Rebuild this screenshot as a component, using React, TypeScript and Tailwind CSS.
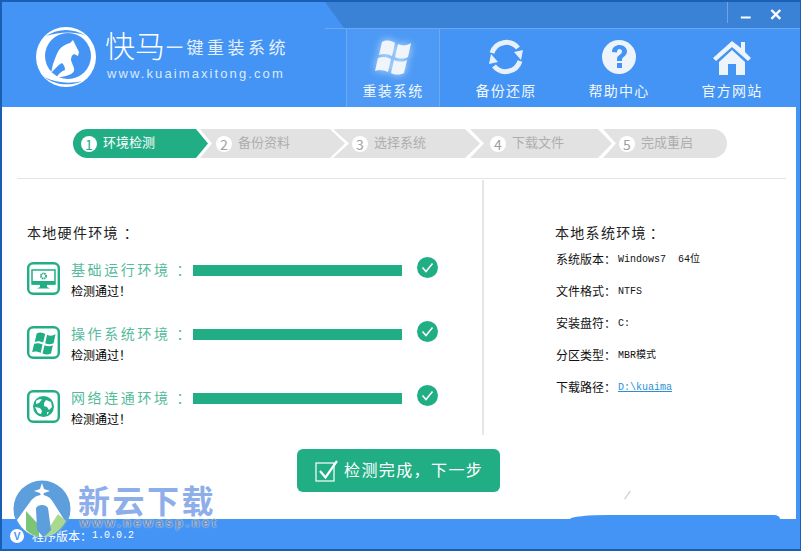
import React from 'react';

const cjk = { fontFamily: '"Noto Sans CJK SC", "Liberation Sans", sans-serif' };

const steps = [
  { n: 1, label: '环境检测', box: 'w-[135px] pl-[8px] rounded-l-full bg-[#22ae85] text-white [clip-path:polygon(0_0,123px_0,135px_50%,123px_100%,0_100%)]' },
  { n: 2, label: '备份资料', box: 'w-[145px] -ml-[8px] pl-[16px] bg-[#e2e2e2] text-[#aeaeae] [clip-path:polygon(0_0,130px_0,145px_50%,130px_100%,0_100%,12px_50%)]' },
  { n: 3, label: '选择系统', box: 'w-[147px] -ml-[12px] pl-[19px] bg-[#e2e2e2] text-[#aeaeae] [clip-path:polygon(0_0,132px_0,147px_50%,132px_100%,0_100%,16px_50%)]' },
  { n: 4, label: '下载文件', box: 'w-[142px] -ml-[10px] pl-[20px] bg-[#e2e2e2] text-[#aeaeae] [clip-path:polygon(0_0,128px_0,142px_50%,128px_100%,0_100%,14px_50%)]' },
  { n: 5, label: '完成重启', box: 'w-[124px] -ml-[9px] pl-[16px] rounded-r-full bg-[#e2e2e2] text-[#aeaeae] [clip-path:polygon(0_0,100%_0,100%_100%,0_100%,13px_50%)]' },
];

const sysRows: [string, React.ReactNode][] = [
  ['系统版本：', 'Windows7  64位'],
  ['文件格式：', 'NTFS'],
  ['安装盘符：', 'C:'],
  ['分区类型：', 'MBR模式'],
  ['下载路径：', <span className="text-[#2b8fd6] underline">D:\kuaima</span>],
];

function LogoIcon() {
  return (
    <svg width="60" height="60" viewBox="0 0 60 60">
      <circle cx="30" cy="30" r="30" fill="#fff" />
      <circle cx="32" cy="29" r="23" fill="#4394f4" />
      <path d="M10 9 C22 1 38 1 50 9 C38 4 24 5 10 9 Z" fill="#4394f4" />
      <path d="M8 50 C20 59 36 59 46 54 C34 57 20 56 8 50 Z" fill="#4394f4" />
      <path d="M37 13 L34 16 C30 17 26 19 23 23 C20 28 19 32 17 37 L15 46 C19 42 22 38 26 36 C28 38 29 40 29 43 C26 44 23 46 21 50 C28 50 36 48 38 44 C39 41 36 37 35 33 C35 30 36 28 38 27 L42 29 L43 25 Z" fill="#fff" />
    </svg>
  );
}

function WindowsPanes({ fill }: { fill: string }) {
  return (
    <g fill={fill}>
      <path d="M8 3 C13 0 18 2 21 4 L18 17 C14 15 10 14 5 16 Z" />
      <path d="M24 5 C28 7 33 7 37 4 L34 18 C30 20 25 20 21 18 Z" />
      <path d="M4 19 C9 17 13 18 17 20 L14 33 C10 31 5 30 1 32 Z" />
      <path d="M20 21 C25 23 29 23 33 21 L30 34 C26 36 21 36 17 34 Z" />
    </g>
  );
}

function NavWindows() {
  return (
    <svg width="38" height="36" viewBox="0 0 38 36" className="drop-shadow-[0_0_4px_rgba(255,255,255,0.7)]">
      <WindowsPanes fill="#f0f5fc" />
    </svg>
  );
}

function NavRefresh() {
  return (
    <svg width="36" height="36" viewBox="0 0 36 36">
      <path d="M4 14 A15 15 0 0 1 30 9" fill="none" stroke="#e8f1fb" strokeWidth="5" />
      <path d="M32 22 A15 15 0 0 1 6 27" fill="none" stroke="#e8f1fb" strokeWidth="5" />
      <path d="M26 13 L35 11 L33 21 Z" fill="#e8f1fb" />
      <path d="M10 23 L1 25 L3 15 Z" fill="#e8f1fb" />
    </svg>
  );
}

function NavHelp() {
  return (
    <svg width="36" height="36" viewBox="0 0 36 36">
      <circle cx="18" cy="18" r="17" fill="#eef4fb" />
      <path d="M11 13 C11 8 15 6 18.500 6 C23 6 26 9 26 12.500 C26 17 21 17.500 21 21 L21 22 L16 22 L16 20 C16 16 21 15.500 21 12.500 C21 11 20 10 18.500 10 C17 10 16 11 16 13.500 Z" fill="#4394f4" />
      <rect x="16" y="24" width="5" height="5" fill="#4394f4" />
    </svg>
  );
}

function NavHome() {
  return (
    <svg width="38" height="36" viewBox="0 0 38 36">
      <path d="M0 19 L19 2 L28 9 L28 3 L32 3 L32 13 L38 19 L35 22 L19 8 L3 22 Z" fill="#eef4fb" />
      <path d="M6 23 L19 11 L32 23 L32 36 L23 36 L23 25 L15 25 L15 36 L6 36 Z" fill="#eef4fb" />
    </svg>
  );
}

function IconMonitor() {
  return (
    <svg width="33" height="33" viewBox="0 0 33 33">
      <rect x="1.200" y="1.200" width="30.600" height="30.600" rx="5" fill="none" stroke="#22ae85" strokeWidth="2.400" />
      <rect x="5" y="8" width="23" height="14" fill="#fff" stroke="#22ae85" strokeWidth="1.500" />
      <rect x="5" y="19" width="23" height="3.500" fill="#22ae85" />
      <path d="M13 22 L20 22 L20 25 L23 26.500 L10 26.500 L13 25 Z" fill="#22ae85" />
      <circle cx="16.500" cy="14" r="2.600" fill="none" stroke="#22ae85" strokeWidth="1.800" strokeDasharray="1.500 0.600" />
    </svg>
  );
}

function IconWindows() {
  return (
    <svg width="33" height="33" viewBox="0 0 33 33">
      <rect x="1.200" y="1.200" width="30.600" height="30.600" rx="5" fill="none" stroke="#22ae85" strokeWidth="2.400" />
      <g transform="translate(4.500 5.500) scale(0.65)">
        <WindowsPanes fill="#22ae85" />
      </g>
    </svg>
  );
}

function IconGlobe() {
  return (
    <svg width="33" height="33" viewBox="0 0 33 33">
      <rect x="1.200" y="1.200" width="30.600" height="30.600" rx="5" fill="none" stroke="#22ae85" strokeWidth="2.400" />
      <circle cx="16.500" cy="16.500" r="10.500" fill="#22ae85" />
      <path d="M9 11 C11 9 13 9 15 9.500 L12 13 L9 14 Z M19 10 L24 12 L25 17 L22 20 L20 17 L17 16 L17 13 Z M8 17 L13 18 L15 21 L14 24 L11 23 Z M20 22 L22 22 L20 25 Z" fill="#fff" />
    </svg>
  );
}

function Check() {
  return (
    <svg width="21" height="21" viewBox="0 0 21 21" className="-mt-[5px] ml-[15px]">
      <circle cx="10.500" cy="10.500" r="10.500" fill="#22ae85" />
      <path d="M5.500 10.500 L9 14.500 L15.500 6.500" fill="none" stroke="#fff" strokeWidth="1.600" />
    </svg>
  );
}

function HwRow({ icon, label }: { icon: React.ReactNode; label: string }) {
  return (
    <div className="flex items-start h-[64px]">
      <div className="mt-[3px] w-[33px]">{icon}</div>
      <div className="ml-[11px]">
        <div className="flex items-center h-[22px]">
          <span className="w-[122px] -mt-[2px] text-[14px] tracking-[2.600px] text-[#56bb9c] whitespace-nowrap">
            {label}
            <span className="ml-[6px]">：</span>
          </span>
          <div className="w-[209px] h-[11px] bg-[#22ae85]" />
          <Check />
        </div>
        <div className="h-[20px] leading-[20px] text-[12px] text-black">检测通过！</div>
      </div>
    </div>
  );
}

export default function App() {
  return (
    <div
      style={cjk}
      className="relative w-[801px] h-[551px] flex flex-col bg-white overflow-hidden border-t-[2px] border-l-[2px] border-b-[2px] border-r border-[#1b5fb4]"
    >
      {/* header */}
      <div className="flex h-[105px] shrink-0 bg-[#4394f4]">
        <div className="w-[323px] shrink-0 flex items-start pl-[34px] pt-[25px]">
          <LogoIcon />
          <div className="ml-[9px] -mt-[2px] text-white">
            <div className="flex items-center h-[38px]">
              <span className="text-[30px] font-light w-[61px] leading-none whitespace-nowrap">快马</span>
              <span className="text-[17px] tracking-[3.500px] whitespace-nowrap leading-none mt-[4px] text-[#e6f0fd]">一键重装系统</span>
            </div>
            <div className="ml-[2px] mt-[1px] text-[13px] tracking-[2.100px] whitespace-nowrap text-[#dceafc] font-['Liberation_Sans']">
              www.kuaimaxitong.com
            </div>
          </div>
        </div>
        <div className="flex-1 flex flex-col">
          <div className="h-[26px] flex justify-end bg-[#3a82d6] [clip-path:polygon(0_0,100%_0,100%_100%,19px_100%)]">
            <div className="w-[73px] h-[21px] border-l border-[#6ba5e6] flex items-center text-white">
              <svg width="73" height="21" viewBox="0 0 73 21">
                <path d="M13 15.500 L23 15.500" stroke="#fff" strokeWidth="2" />
                <path d="M44 8 L53 17 M53 8 L44 17" stroke="#fff" strokeWidth="2.400" />
              </svg>
            </div>
          </div>
          <div className="flex-1 flex gap-[19px] pl-[21px] border-t border-[#6ba9f3]">
            {[
              { label: '重装系统', icon: <NavWindows />, active: true },
              { label: '备份还原', icon: <NavRefresh /> },
              { label: '帮助中心', icon: <NavHelp /> },
              { label: '官方网站', icon: <NavHome /> },
            ].map((t) => (
              <div
                key={t.label}
                className={
                  t.active
                    ? 'w-[94px] flex flex-col items-center pt-[10px] bg-[#4c9af5] border-x border-[#6ba9f3]'
                    : 'w-[94px] flex flex-col items-center pt-[10px]'
                }
              >
                <div className="h-[36px] flex items-center">{t.icon}</div>
                <span className="mt-[5px] text-[14px] leading-[20px] tracking-[1.200px] text-[#f2f7fd] whitespace-nowrap">{t.label}</span>
              </div>
            ))}
          </div>
        </div>
      </div>

      {/* body */}
      <div className="flex-1 flex flex-col border-r-[4px] border-[#4394f4] min-h-0">
        <div className="flex pl-[71px] pt-[22px]">
          {steps.map((s) => (
            <div key={s.n} className={`h-[29px] flex items-center shrink-0 ${s.box}`}>
              <span className={s.n === 1 ? 'w-[16px] h-[16px] rounded-full bg-white flex items-center justify-center text-[14px] leading-none text-[#22ae85]' : 'w-[16px] h-[16px] rounded-full bg-white flex items-center justify-center text-[14px] leading-none text-[#a0a0a0]'}>
                {s.n}
              </span>
              <span className="ml-[6px] -mt-[3px] text-[13px] whitespace-nowrap">{s.label}</span>
            </div>
          ))}
        </div>

        <div className="mt-[20px] ml-[15px] mr-[10px] h-px bg-[#e4e4e4]" />

        <div className="flex h-[258px]">
          <div className="w-[480px] pl-[25px] pt-[43px]">
            <div className="h-[20px] leading-[20px] text-[14px] tracking-[1.300px] text-[#222] mb-[17px]">
              本地硬件环境<span className="ml-[5px]">：</span>
            </div>
            <HwRow icon={<IconMonitor />} label="基础运行环境" />
            <HwRow icon={<IconWindows />} label="操作系统环境" />
            <HwRow icon={<IconGlobe />} label="网络连通环境" />
          </div>
          <div className="w-[2px] mt-[1px] mb-[2px] bg-[#e6e6e6]" />
          <div className="pl-[71px] pt-[43px]">
            <div className="h-[20px] leading-[20px] text-[14px] tracking-[1.300px] text-[#222] mb-[1px]">
              本地系统环境<span className="ml-[3px]">：</span>
            </div>
            <div className="ml-[1px]">
              {sysRows.map(([k, v]) => (
                <div key={k} className="h-[32px] flex items-center text-[12px] text-[#111] whitespace-pre">
                  <span className="w-[62px]">{k}</span>
                  <span className="text-[10px] font-['Liberation_Mono','Noto_Sans_CJK_SC',monospace]">{v}</span>
                </div>
              ))}
            </div>
          </div>
        </div>

        <button className="mt-[12px] ml-[295px] w-[203px] h-[43px] rounded-md bg-[#22ae85] flex items-center pl-[18px] text-white">
          <svg width="24" height="24" viewBox="0 0 24 24">
            <rect x="1" y="4" width="18" height="18" fill="none" stroke="#fff" strokeWidth="1.200" />
            <path d="M5 12 L10.500 18.500 L22 2" fill="none" stroke="#fff" strokeWidth="2.200" />
          </svg>
          <span className="ml-[5px] -mt-[3px] text-[16px] tracking-[1.400px] whitespace-nowrap">检测完成，下一步</span>
        </button>
      </div>

      {/* footer */}
      <div className="h-[30px] shrink-0 bg-[#4394f4] flex items-center pl-[8px] pt-[4px] text-white">
        <span className="w-[14px] h-[14px] rounded-full bg-white text-[#4394f4] text-[10px] font-bold flex items-center justify-center font-['Liberation_Sans']">V</span>
        <span className="ml-[8px] text-[12px] leading-[14px]">程序版本：</span>
        <span className="text-[10px] leading-[14px] font-['Liberation_Mono',monospace]">1.0.0.2</span>
      </div>

      {/* blue bump above the footer, right side */}
      <div className="absolute left-[568px] bottom-[30px] w-[210px] h-[4px] bg-[#4394f4] [border-top-left-radius:40px_4px] [border-top-right-radius:6px_4px]" />
      <div className="absolute left-[625px] top-[488px] w-px h-[10px] bg-[#c8c8c8] rotate-[35deg]" />

      {/* site watermark laid over the corner */}
      <div className="absolute left-[11px] top-[478px] pointer-events-none">
        <svg width="58" height="58" viewBox="0 0 58 58">
          <circle cx="29" cy="29" r="28.500" fill="#5c9fdc" />
          <path d="M4 40 L17 22 C21 16 26 15 29 15 C33 15 37 17 40 22 L52 41 C46 52 38 57 29 57 C18 57 9 50 4 40 Z" fill="#fff" />
          <path d="M13 31 L13 50 C17 54 22 56 26 57 L26 45 Z" fill="#7cc576" />
          <path d="M30 57 C40 56 48 50 53 41 L45 34 Z" fill="#a9d98f" />
          <path d="M23 28 C25 24 33 24 35 28 L38 50 C34 54 32 56 30 57 L24 50 Z" fill="#5c9fdc" />
          <path d="M29 3 L31 9 L37 11 L31 13 L29 19 L27 13 L21 11 L27 9 Z" fill="#fff" />
        </svg>
      </div>
      <div className="absolute left-[76px] top-[483px] text-[32px] leading-[28px] tracking-[2.500px] font-bold text-[#8eaeea] whitespace-nowrap">新云下载</div>
      <div className="absolute left-[78px] top-[515px] text-[13px] leading-[12px] font-bold tracking-[2.450px] text-[#6f8db5] [text-shadow:0_0_2px_#fff] whitespace-nowrap font-['Liberation_Sans']">www.newasp.net</div>
    </div>
  );
}
